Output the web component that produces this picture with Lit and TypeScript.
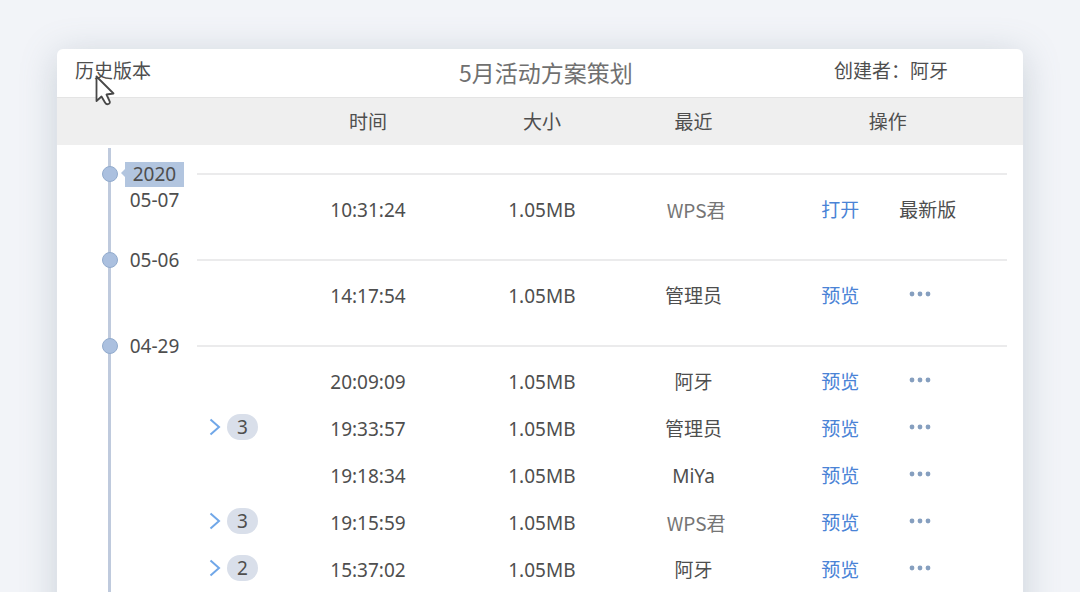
import { LitElement, html, css, nothing } from "lit";
import { customElement, property, state } from "lit/decorators.js";

interface Version {
  time: string;
  size: string;
  author: string;
  muted?: boolean;
  latest?: boolean;
  folded?: number;
}

interface Day {
  year?: string;
  date: string;
  versions: Version[];
}

const DAYS: Day[] = [
  {
    year: "2020",
    date: "05-07",
    versions: [{ time: "10:31:24", size: "1.05MB", author: "WPS君", muted: true, latest: true }],
  },
  {
    date: "05-06",
    versions: [{ time: "14:17:54", size: "1.05MB", author: "管理员" }],
  },
  {
    date: "04-29",
    versions: [
      { time: "20:09:09", size: "1.05MB", author: "阿牙" },
      { time: "19:33:57", size: "1.05MB", author: "管理员", folded: 3 },
      { time: "19:18:34", size: "1.05MB", author: "MiYa" },
      { time: "19:15:59", size: "1.05MB", author: "WPS君", muted: true, folded: 3 },
      { time: "15:37:02", size: "1.05MB", author: "阿牙", folded: 2 },
    ],
  },
];

@customElement("version-table")
export class VersionTable extends LitElement {
  @property({ attribute: false }) days: Day[] = [];

  static styles = css`
    :host {
      display: block;
    }
    .table {
      width: 100%;
      table-layout: fixed;
      border-collapse: separate;
      border-spacing: 0;
      text-align: center;
    }
    .table th,
    .table td {
      padding: 0;
      font-weight: 400;
    }
    .col-date {
      width: 140px;
    }
    .col-fold {
      width: 86px;
    }
    .col-time {
      width: 17.6%;
    }
    .col-size {
      width: 18.4%;
    }
    .col-author {
      width: 13%;
    }
    .table .head {
      height: 45px;
      padding-top: 2px;
      background: #efefef;
      background-clip: padding-box;
      border-bottom: 3px solid #fff;
    }
    .table .head-actions {
      padding-right: 4px;
    }
    .table .day {
      vertical-align: top;
      background: linear-gradient(#bfcadd, #bfcadd) 51px 0 / 3px 100% no-repeat;
    }
    .stop {
      display: flex;
      align-items: flex-start;
      gap: 7px;
      padding: 14px 0 0 45px;
    }
    .marker {
      box-sizing: border-box;
      width: 16px;
      height: 16px;
      margin-top: 4px;
      border: 1px solid #92abcd;
      border-radius: 50%;
      background: #abc0df;
    }
    .label {
      display: flex;
      flex-direction: column;
      align-items: center;
      gap: 1px;
      width: 59px;
      line-height: 25px;
    }
    .year {
      position: relative;
      align-self: stretch;
      background: #b2c5df;
    }
    .year::before {
      content: "";
      position: absolute;
      left: -4px;
      top: 7px;
      border: 4px solid transparent;
      border-left-width: 0;
      border-right-color: #b2c5df;
    }
    .table .rule {
      height: 39px;
      vertical-align: top;
    }
    .line {
      height: 2px;
      margin: 25px 16px 0 0;
      background: #ebebec;
    }
    .row {
      height: 47px;
    }
    .table .muted {
      padding: 0 0 3px 5px;
      font-family: "Noto Sans CJK SC", sans-serif;
      color: #757575;
    }
    button {
      font: inherit;
      color: inherit;
      border: 0;
      padding: 0;
      background: none;
      cursor: pointer;
    }
    .fold {
      display: flex;
      align-items: center;
      gap: 6px;
      margin: 0 0 6px 12px;
    }
    .count {
      width: 31px;
      border-radius: 13px;
      line-height: 26px;
      background: #d9dfea;
    }
    .actions {
      display: flex;
      align-items: center;
      gap: 40px;
      padding-left: 65px;
      white-space: nowrap;
    }
    .link {
      color: #4a83d6;
      text-decoration: none;
    }
    .more {
      display: flex;
      padding: 5px 10px 10px;
    }
  `;

  private renderVersion(v: Version) {
    return html`<tr class="row">
      <td>
        ${v.folded
          ? html`<button class="fold" aria-label="展开 ${v.folded}">
              <svg width="12" height="18" viewBox="0 0 12 18" fill="none" stroke="#70a7e8" stroke-width="2">
                <path d="M1.5 1.5 10 9 1.5 16.5" />
              </svg>
              <span class="count">${v.folded}</span>
            </button>`
          : nothing}
      </td>
      <td>${v.time}</td>
      <td>${v.size}</td>
      <td class=${v.muted ? "muted" : "author"}>${v.author}</td>
      <td>
        <div class="actions">
          <a class="link" href="#">${v.latest ? "打开" : "预览"}</a>
          ${v.latest
            ? html`<span>最新版</span>`
            : html`<button class="more" aria-label="更多">
                <svg width="22" height="6" viewBox="0 0 22 6" fill="#869fbf">
                  <circle cx="3" cy="3" r="2.4" />
                  <circle cx="11" cy="3" r="2.4" />
                  <circle cx="19" cy="3" r="2.4" />
                </svg>
              </button>`}
        </div>
      </td>
    </tr>`;
  }

  render() {
    return html`<table class="table">
      <colgroup>
        <col class="col-date" />
        <col class="col-fold" />
        <col class="col-time" />
        <col class="col-size" />
        <col class="col-author" />
        <col />
      </colgroup>
      <thead>
        <tr>
          <td class="head" colspan="2"></td>
          <th class="head" scope="col">时间</th>
          <th class="head" scope="col">大小</th>
          <th class="head" scope="col">最近</th>
          <th class="head head-actions" scope="col">操作</th>
        </tr>
      </thead>
      ${this.days.map(
        (day) => html`<tbody>
          <tr>
            <th class="day" scope="rowgroup" rowspan=${day.versions.length + 1}>
              <div class="stop">
                <span class="marker"></span>
                <div class="label">
                  ${day.year ? html`<span class="year">${day.year}</span>` : nothing}
                  <span>${day.date}</span>
                </div>
              </div>
            </th>
            <td class="rule" colspan="5"><div class="line"></div></td>
          </tr>
          ${day.versions.map((v) => this.renderVersion(v))}
        </tbody>`
      )}
    </table>`;
  }
}

@customElement("app-root")
export class AppRoot extends LitElement {
  @state() private days = DAYS;

  static styles = css`
    :host {
      display: block;
      position: relative;
      box-sizing: border-box;
      height: 100vh;
      overflow: hidden;
      padding: 49px 57px 0;
      background: #f2f4f8;
      color: #4e4e4e;
      font: 19px/25px "Noto Sans", "Noto Sans CJK SC", sans-serif;
    }
    .card {
      min-height: 100vh;
      border-radius: 6px;
      background: #fff;
      box-shadow: 0 6px 36px rgba(110, 130, 145, 0.3);
    }
    .bar {
      display: grid;
      grid-template-columns: 1fr auto 1fr;
      align-items: center;
      box-sizing: border-box;
      height: 49px;
      padding-bottom: 3px;
      border-bottom: 1px solid #e4e4e4;
    }
    .history {
      margin-left: 18px;
    }
    .title {
      margin: 0 0 0 12px;
      font: 400 23px/32px "Noto Sans CJK SC", sans-serif;
      color: #707070;
    }
    .creator {
      justify-self: end;
      margin-right: 75px;
    }
    .pointer {
      position: absolute;
      left: 94px;
      top: 74px;
    }
  `;

  render() {
    return html`
      <main class="card">
        <header class="bar">
          <span class="history">历史版本</span>
          <h1 class="title">5月活动方案策划</h1>
          <span class="creator">创建者：阿牙</span>
        </header>
        <version-table .days=${this.days}></version-table>
      </main>
      <svg class="pointer" width="22" height="33" viewBox="0 0 22 33" aria-hidden="true">
        <path
          d="M2.500 2.500V27L7.500 22.500L11 28.500Q12.500 31 14.500 30Q16.500 29 15.500 27L12.500 20.500L19.500 19.500Z"
          fill="#fff"
          stroke="#484848"
          stroke-width="1.800"
          stroke-linejoin="round"
        />
      </svg>
    `;
  }
}
